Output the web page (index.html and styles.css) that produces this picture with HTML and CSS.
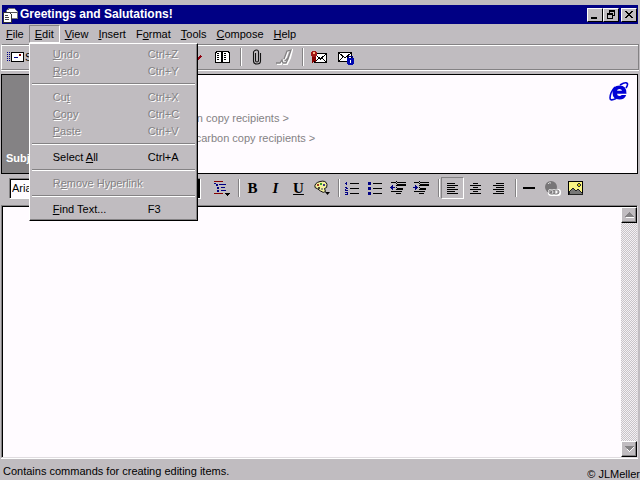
FILE: index.html
```
<!DOCTYPE html>
<html lang="en">
  <head>
    <meta charset="UTF-8" />
    <meta name="viewport" content="width=device-width, initial-scale=1.0" />
    <title>Greetings and Salutations!</title>
    <link rel="stylesheet" href="styles.css">
  </head>
  <body>
    <header class="titlebar">
      <svg class="app-icon" width="16" height="16" viewBox="0 0 16 16">
        <path d="M4 6l1-3 3-2h4l3 3v7H6z" fill="#fff" stroke="#777" />
        <path d="M5 5h10" stroke="#555" />
        <path d="M1 5h6l2 2v8H1z" fill="#fff" stroke="#333" />
        <path d="M3 8.500h3M3 10.500h4M3 12.500h4" stroke="#444" />
      </svg>
      <h1>Greetings and Salutations!</h1>
      <div class="win-btns">
        <button aria-label="Minimize"><svg width="12" height="10"><path d="M2 7h6v2H2z" /></svg></button>
        <button aria-label="Restore"><svg width="12" height="10"><path d="M4 0h6v6H8V5h1V2H5v1H4zM2 3h6v6H2zM3 5v3h4V5z" fill-rule="evenodd" /></svg></button>
        <button class="close" aria-label="Close"><svg width="12" height="10"><path d="M2 1h2v1h1v1h2V2h1V1h2v1H9v1H8v1H7v1h1v1h1v1h1v1H8V7H7V6H5v1H4v1H2V7h1V6h1V5h1V4H4V3H3V2H2z" /></svg></button>
      </div>
    </header>

    <nav class="menubar">
      <button><u>F</u>ile</button>
      <div class="menu-wrap">
        <button class="open"><u>E</u>dit</button>
        <ul class="menu">
          <li><button disabled><span><u>U</u>ndo</span><span>Ctrl+Z</span></button></li>
          <li><button disabled><span><u>R</u>edo</span><span>Ctrl+Y</span></button></li>
          <li class="line"></li>
          <li><button disabled><span>Cu<u>t</u></span><span>Ctrl+X</span></button></li>
          <li><button disabled><span><u>C</u>opy</span><span>Ctrl+C</span></button></li>
          <li><button disabled><span><u>P</u>aste</span><span>Ctrl+V</span></button></li>
          <li class="line"></li>
          <li><button><span>Select <u>A</u>ll</span><span>Ctrl+A</span></button></li>
          <li class="line"></li>
          <li><button disabled><span>R<u>e</u>move Hyperlink</span></button></li>
          <li class="line"></li>
          <li><button><span><u>F</u>ind Text...</span><span>F3</span></button></li>
        </ul>
      </div>
      <button><u>V</u>iew</button>
      <button><u>I</u>nsert</button>
      <button>F<u>o</u>rmat</button>
      <button><u>T</u>ools</button>
      <button><u>C</u>ompose</button>
      <button><u>H</u>elp</button>
    </nav>

    <div class="toolbar">
      <button class="send">
        <svg width="17" height="12" viewBox="0 0 17 12">
          <path d="M0 1.500h3M0 3.500h3M0 5.500h3M0 7.500h3M0 9.500h3" stroke="#000084" stroke-dasharray="1 1" />
          <path d="M4 1.500h12v9H4.500v-9" fill="#fff" stroke="#000" />
          <path d="M12 3h2v2h-2z" fill="#800000" />
          <path d="M7 6.500h4" stroke="#000084" />
        </svg>
        Send
      </button>
      <button class="check" aria-label="Check names">
        <svg width="16" height="16" viewBox="0 0 16 16"><path d="M5 9l3 4 6-6" fill="none" stroke="#900010" stroke-width="2" /></svg>
      </button>
      <button aria-label="Address book">
        <svg width="16" height="14" viewBox="0 0 16 14">
          <path d="M2 1h5l1 1 1-1h5v1h1v10H9l-1 1-1-1H1V2h1z" fill="#fff" stroke="#000" />
          <path d="M3 3.500h3M3 5.500h3M3 7.500h3M3 9.500h3M10 3.500h3M10 5.500h3M10 7.500h3M10 9.500h3" stroke="#000" stroke-dasharray="2 1" />
          <path d="M8 2v11" stroke="#000" stroke-width="2" />
        </svg>
      </button>
      <span class="sep"></span>
      <button aria-label="Insert file">
        <svg class="smooth" width="10" height="16" viewBox="0 0 10 16"><path d="M3.500 4v7.500q0 1.500 1.500 1.500t1.500-1.500V3q0-2-2-2t-3 2v9q0 3 3.500 3t3.500-3V4" fill="none" stroke="#111" stroke-width="1.100" /></svg>
      </button>
      <button aria-label="Insert signature" disabled>
        <svg class="smooth" width="18" height="18" viewBox="0 0 18 18">
          <path d="M2 16h4l2-3 1 3h3l3-6 2-8M10 12l3-9 4-1-3 8-4 4" fill="none" stroke="#fff" stroke-width="2" />
          <path d="M1 15h4l2-3 1 3h3l2-4 3-9M9 11l3-8 4-1-3 8-3 3" fill="none" stroke="#848284" stroke-width="1.300" />
        </svg>
      </button>
      <span class="sep"></span>
      <button aria-label="Digitally sign">
        <svg width="18" height="15" viewBox="0 0 18 15">
          <path d="M4.500 3.500h12v9h-12z" fill="#fff" stroke="#000" />
          <path d="M5 4l5.500 5L16 4M5 12l4-4M16 12l-4-4" fill="none" stroke="#000" />
          <path d="M2 6h4v7l-2-2-2 2z" fill="#840000" />
          <path d="M2 1h4v1h1v4H6v1H2V6H1V2h1z" fill="#a01818" />
          <path d="M3 2h2v2H3z" fill="#ffb080" />
        </svg>
      </button>
      <button aria-label="Encrypt">
        <svg width="18" height="17" viewBox="0 0 18 17">
          <path d="M1.500 3.500h13v9h-13z" fill="#fff" stroke="#000" />
          <path d="M2 4l6 5 6-5M2 12l4-4M14 12l-4-4" fill="none" stroke="#000" />
          <path d="M11.500 10V8l1-1h2l1 1v2" fill="none" stroke="#000084" />
          <path d="M10 9h7v6h-1v1h-5v-1h-1z" fill="#0008b0" />
          <path d="M13 11h1v3h-1z" fill="#fff" />
        </svg>
      </button>
    </div>

    <section class="head">
      <div class="labels">
        <label for="subject">Subject:</label>
      </div>
      <div class="fields">
        <input aria-label="To" type="text" />
        <input aria-label="Cc" type="text" placeholder="&lt; click here to enter carbon copy recipients &gt;" />
        <input aria-label="Bcc" type="text" placeholder="&lt; click here to enter blind carbon copy recipients &gt;" />
        <input id="subject" type="text" />
      </div>
      <svg class="logo smooth" width="20" height="20" viewBox="0 0 20 20">
        <path d="M17.500 11.800H8q.3 2.200 2.500 2.200 1.500 0 2.200-1h4.500Q15.600 17.500 10.500 17.500 3.500 17.500 3.500 10.500T10.500 3.500Q17.800 3.500 17.500 11.800zM8 8.800h5Q12.700 7 10.500 7T8 8.800z" fill="#0000d6" fill-rule="evenodd" />
        <path d="M11 3q6-3.500 7.300-1.500.8 1.500-1.300 4.500M6 5Q1 10.500 1 16q0 3.500 6 .5" fill="none" stroke="#0000d6" stroke-width="1.600" />
      </svg>
    </section>

    <div class="formatbar">
      <select class="font" aria-label="Font"><option>Arial</option></select>
      <select class="size" aria-label="Font size"><option>10</option></select>
      <button aria-label="Paragraph style">
        <svg width="18" height="16" viewBox="0 0 18 16">
          <path d="M1 1.500h9M1 13.500h9" stroke="#840000" />
          <path d="M3 4.500h2M4 7.500h2M4 10.500h2" stroke="#000084" stroke-width="2" />
          <path d="M6 4.500h7M8 7.500h4M8 10.500h5M1 3.500h2" stroke="#000084" />
          <path d="M12 13h5v1h-1v1h-1v1h-1v-1h-1v-1h-1z" />
        </svg>
      </button>
      <span class="sep"></span>
      <button class="txt b">B</button>
      <button class="txt i">I</button>
      <button class="txt"><u>U</u></button>
      <button aria-label="Font color">
        <svg class="smooth" width="18" height="16" viewBox="0 0 18 16">
          <path d="M7 1.500q6-1.500 7 3 .5 4-2.500 4l1 3q-2 2-5-.5T2 7.500q-1-4.500 5-6z" fill="#f4f09a" stroke="#111" />
          <circle cx="5" cy="5" r="1" fill="#840000" /><circle cx="8" cy="4" r="1" fill="#008000" /><circle cx="11" cy="5" r="1" fill="#000084" /><circle cx="6" cy="8" r="1" fill="#111" /><circle cx="9" cy="9" r="1" fill="#777" />
          <path d="M12 12h5l-2.500 3z" />
        </svg>
      </button>
      <span class="sep"></span>
      <button aria-label="Numbered list">
        <svg width="15" height="15" viewBox="0 0 15 15">
          <path d="M5 2.500h9M5 7.500h9M5 12.500h9" stroke="#000" />
          <path d="M1 1h1v3H1zM0 2h1v1H0zM0 6h2v1h1v1H1v1h2v1H0V8h1V7H0zM0 11h3v3H0v-1h2v-1H0z" fill="#000084" />
        </svg>
      </button>
      <button aria-label="Bulleted list">
        <svg width="15" height="15" viewBox="0 0 15 15">
          <path d="M5 2.500h9M5 7.500h9M5 12.500h9" stroke="#000" />
          <path d="M0 1h3v3H0zM0 6h3v3H0zM0 11h3v3H0z" fill="#000084" />
        </svg>
      </button>
      <button aria-label="Decrease indent">
        <svg width="17" height="14" viewBox="0 0 17 14">
          <path d="M1 1.500h5M7 1.500h9M7 10.500h5M1 10.500h5M7 12.500h4" stroke="#000" />
          <path d="M7 4h9M7 7.500h6" stroke="#000" stroke-width="2" />
          <path d="M0 6h1V5h1V4h1v2h2v1H3v2H2V8H1V7H0z" fill="#000084" />
          <path d="M6.500 0v14" stroke="#000" stroke-dasharray="1 1" />
        </svg>
      </button>
      <button aria-label="Increase indent">
        <svg width="17" height="14" viewBox="0 0 17 14">
          <path d="M1 1.500h5M7 1.500h9M7 10.500h5M1 10.500h5M7 12.500h4" stroke="#000" />
          <path d="M7 4h9M7 7.500h6" stroke="#000" stroke-width="2" />
          <path d="M0 6h2V4h1v1h1v1h1v1H4v1H3v1H2V7H0z" fill="#000084" />
          <path d="M6.500 0v14" stroke="#000" stroke-dasharray="1 1" />
        </svg>
      </button>
      <span class="sep"></span>
      <button class="pressed" aria-label="Align left">
        <svg width="13" height="13" viewBox="0 0 13 13"><path d="M1 1.500h8M1 3.500h11M1 5.500h8M1 7.500h11M1 9.500h8M1 11.500h11" stroke="#000" /></svg>
      </button>
      <button aria-label="Center">
        <svg width="13" height="13" viewBox="0 0 13 13"><path d="M4 1.500h5M1 3.500h11M4 5.500h5M1 7.500h11M4 9.500h5M1 11.500h11" stroke="#000" /></svg>
      </button>
      <button aria-label="Align right">
        <svg width="13" height="13" viewBox="0 0 13 13"><path d="M4 1.500h8M1 3.500h11M4 5.500h8M1 7.500h11M4 9.500h8M1 11.500h11" stroke="#000" /></svg>
      </button>
      <span class="sep"></span>
      <button aria-label="Insert line">
        <svg width="13" height="12" viewBox="0 0 13 12"><path d="M0 5h12v2H0z" /></svg>
      </button>
      <button aria-label="Insert link" disabled>
        <svg class="smooth" width="17" height="17" viewBox="0 0 17 17">
          <circle cx="7" cy="7" r="6" fill="#777577" />
          <path d="M4 4q1-2 3-1" fill="none" stroke="#ddd" />
          <rect x="5" y="10" width="7" height="5" rx="2" fill="none" stroke="#fff" stroke-width="2" /><rect x="9" y="10" width="7" height="5" rx="2" fill="none" stroke="#fff" stroke-width="2" />
          <rect x="5" y="10" width="6" height="4" rx="2" fill="none" stroke="#777577" /><rect x="9" y="10" width="6" height="4" rx="2" fill="none" stroke="#777577" />
        </svg>
      </button>
      <button aria-label="Insert picture">
        <svg width="16" height="15" viewBox="0 0 16 15">
          <path d="M.5.500h14v13H.5z" fill="#fbf584" stroke="#000" />
          <path d="M1 11l4-4 3 3 2-2 4 4v1H1z" fill="#777" stroke="#222" />
          <path d="M10 2h2v1h1v2h-1v1h-2V5H9V3h1z" fill="#333" /><path d="M10 3h2v2h-2z" fill="#d0c800" />
        </svg>
      </button>
    </div>

    <main class="editor">
      <textarea aria-label="Message"></textarea>
      <div class="scroll">
        <button aria-label="Scroll up"><svg width="9" height="6"><path d="M5 1h1v1h1v1h1v1h1v2H1V5h8z" fill="#fff" /><path d="M4 0h1v1h1v1h1v1h1v1h1v1H0V4h1V3h1V2h1V1h1z" fill="#848284" /></svg></button>
        <button aria-label="Scroll down"><svg width="9" height="6"><path d="M1 1h8v1H8v1H7v1H6v1H5v1H4z" fill="#fff" /><path d="M0 0h9v1H8v1H7v1H6v1H5v1H4V4H3V3H2V2H1V1H0z" fill="#848284" /></svg></button>
      </div>
    </main>

    <footer class="status">
      <span>Contains commands for creating editing items.</span>
      <span class="credit">© JLMeller</span>
    </footer>
  </body>
</html>
```
FILE: styles.css
```
* {
  margin: 0;
  padding: 0;
  box-sizing: border-box;
}
body {
  background: #c0bcc0;
  color: #000;
  font: 11px/16px "Liberation Sans", Arial, sans-serif;
  min-height: 100vh;
  display: flex;
  flex-direction: column;
  padding-top: 5px;
}
button,
input,
select,
textarea {
  font: inherit;
  color: inherit;
  background: none;
  border: 0;
  outline: 0;
}
svg {
  display: block;
  flex: none;
  shape-rendering: crispEdges;
}
svg.smooth {
  shape-rendering: auto;
}
u {
  text-underline-offset: 1px;
}

/* title */
.titlebar {
  display: flex;
  align-items: center;
  height: 19px;
  margin: 0 2px;
  background: #000084;
  color: #fff;
}
.titlebar h1 {
  flex: 1;
  font-size: 12px;
  line-height: 19px;
  margin-left: 2px;
}
.win-btns {
  display: flex;
  padding-right: 1px;
}
.win-btns button {
  width: 16px;
  height: 14px;
  padding: 1px;
  background: #c0bcc0;
  border: 1px solid;
  border-color: #fff #000 #000 #fff;
}
.win-btns .close {
  margin-left: 2px;
}

/* menu */
.menubar {
  display: flex;
  height: 20px;
  padding: 1px 1px 0;
}
.menubar > button,
.menu-wrap > button {
  height: 18px;
  padding: 0 5px;
}
.menu-wrap {
  position: relative;
}
.menu-wrap > .open {
  border: 1px solid;
  border-color: #848284 #fff #fff #848284;
}
.menu {
  position: absolute;
  z-index: 5;
  left: 0;
  top: 18px;
  width: 169px;
  padding: 2px;
  list-style: none;
  background: #c0bcc0;
  border: 1px solid;
  border-color: #fff #000 #000 #fff;
  box-shadow: inset -1px -1px #848284;
}
.menu button {
  display: grid;
  grid-template-columns: 95px auto;
  width: 100%;
  height: 17px;
  padding-left: 21px;
  text-align: left;
  line-height: 17px;
  white-space: nowrap;
}
.menu button:disabled {
  color: #848284;
  text-shadow: 1px 1px #fff;
}
.menu .line {
  height: 9px;
  padding-top: 3px;
}
.menu .line::before {
  content: "";
  display: block;
  border-top: 1px solid #848284;
  border-bottom: 1px solid #fff;
}

/* toolbar */
.toolbar {
  display: flex;
  align-items: center;
  height: 26px;
  margin: 0 1px 4px;
  border: 1px solid #848284;
  border-left-color: #fff;
  box-shadow: inset 0 1px #fff, 0 1px #fff;
}
.toolbar button,
.formatbar button {
  display: flex;
  align-items: center;
  justify-content: center;
  width: 23px;
  height: 22px;
}
.toolbar button {
  width: 27px;
}
.toolbar .send {
  width: 70px;
  justify-content: flex-start;
  gap: 1px;
  padding-left: 5px;
}
.toolbar .check {
  margin-left: 109px;
}
.sep {
  width: 2px;
  height: 18px;
  margin: 0 1px 0 5px;
  border-left: 1px solid #848284;
  border-right: 1px solid #fff;
}

/* addresses */
.head {
  display: flex;
  height: 100px;
  margin: 0 2px 0 1px;
  background: #fffbff;
  border: 1px solid #000;
}
.labels {
  display: flex;
  align-items: flex-end;
  width: 68px;
  padding: 0 4px 5px;
  background: #848284;
  color: #fff;
  font-weight: bold;
}
.labels label {
  line-height: 20px;
}
.fields {
  flex: 1;
  padding-top: 13px;
}
.fields input {
  display: block;
  width: 100%;
  height: 20px;
}
.fields input::placeholder {
  color: #848284;
  opacity: 1;
}
.logo {
  margin: 7px 8px 0 0;
}

/* format */
.formatbar {
  display: flex;
  align-items: center;
  height: 31px;
  padding: 0 0 3px 9px;
}
.formatbar select {
  appearance: none;
  height: 21px;
  padding-left: 2px;
  background: #fffbff;
  border: 1px solid;
  border-color: #848284 #fff #fff #848284;
  box-shadow: inset 1px 1px #000;
}
.formatbar .font {
  width: 140px;
}
.formatbar .size {
  width: 46px;
  margin: 0 9px 0 6px;
  box-shadow: inset -2px 0 #000;
}
.formatbar .txt {
  font: bold 15px "Liberation Serif", serif;
}
.formatbar .i {
  font-style: italic;
}
.formatbar .pressed {
  border: 1px solid;
  border-color: #848284 #fff #fff #848284;
}

/* body of the mail */
.editor {
  flex: 1;
  display: flex;
  margin: 0 2px 0 1px;
  background: #fffbff;
  border: 1px solid;
  border-color: #848284 #e0dce0 #e0dce0 #848284;
  box-shadow: inset 1px 1px #000, 0 1px #fff;
}
.editor textarea {
  flex: 1;
  resize: none;
  padding: 4px;
}
.scroll {
  display: flex;
  flex-direction: column;
  justify-content: space-between;
  width: 16px;
  margin-top: 1px;
  background: repeating-conic-gradient(#c8c4c8 0 25%, #f4f0f4 0 50%) 0 0 / 2px 2px;
}
.scroll button {
  display: flex;
  align-items: center;
  justify-content: center;
  height: 16px;
  background: #c0bcc0;
  border: 1px solid;
  border-color: #fff #000 #000 #fff;
  box-shadow: inset -1px -1px #848284;
}

.status {
  display: flex;
  justify-content: space-between;
  height: 22px;
  padding: 5px 0 0 3px;
}
.status .credit {
  padding-top: 3px;
}
```
